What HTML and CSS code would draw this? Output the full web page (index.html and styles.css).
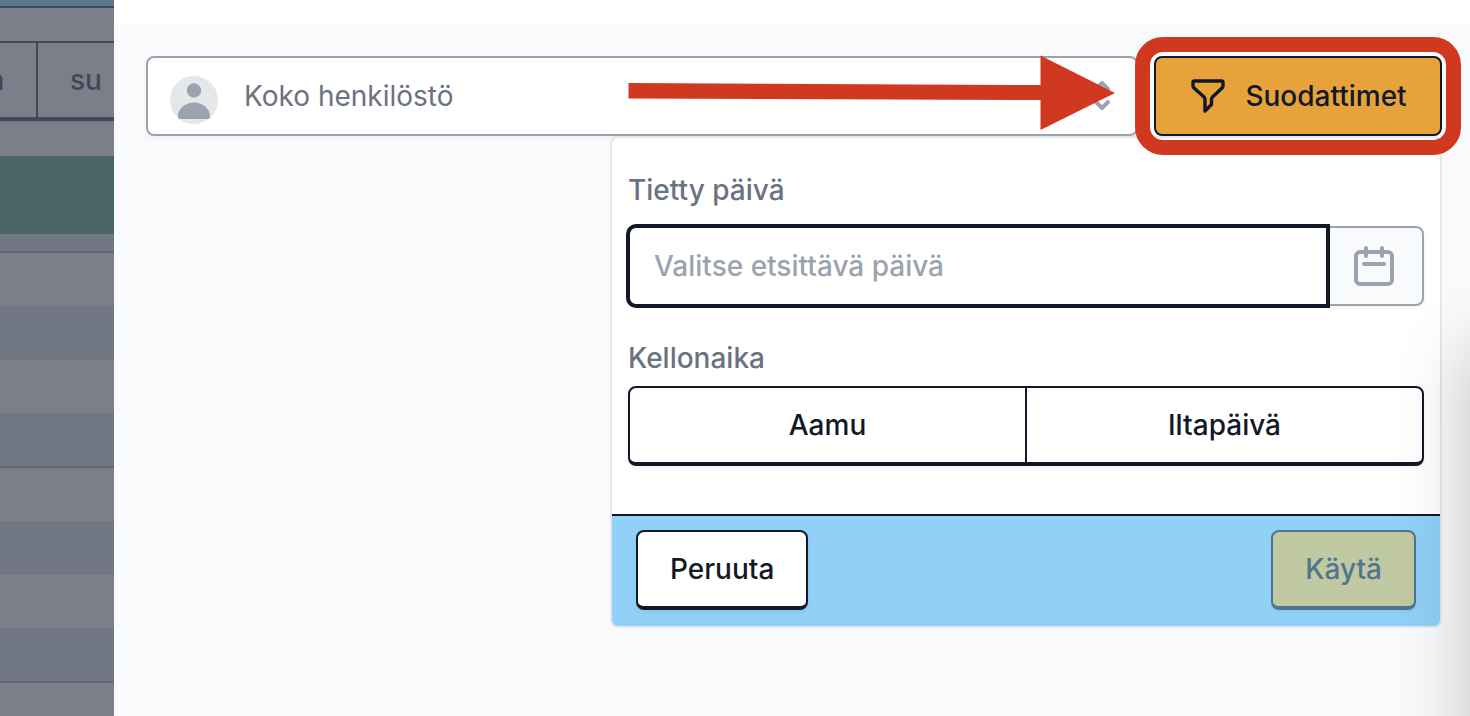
FILE: index.html
```html
<!DOCTYPE html>
<html lang="fi">
<head>
<meta charset="utf-8">
<title>Suodattimet</title>
<link rel="stylesheet" href="styles.css">
</head>
<body>
<div class="app">
  <aside class="calendar">
    <div class="cal-top"></div>
    <div class="cal-gap"></div>
    <div class="cal-days"><span class="cal-day">la</span><span class="cal-day">su</span></div>
    <div class="cal-space"></div>
    <div class="cal-event"></div>
    <div class="cal-rest"></div>
    <div class="cal-hour"></div>
    <div class="cal-hour"></div>
    <div class="cal-hour"></div>
  </aside>
  <main class="drawer">
    <div class="drawer-head"></div>
    <div class="drawer-body">
      <div class="toolbar">
        <div class="staff">
          <svg class="avatar" viewBox="0 0 48 48" aria-hidden="true"><circle cx="24" cy="24" r="24" fill="#e5e7eb"/><circle cx="24" cy="14.500" r="7.200" fill="#9ca3af"/><path d="M8 41C7.500 33 15 26.500 24 26.500S40.500 33 40 41Q40 43 38 43H10Q8 43 8 41Z" fill="#9ca3af"/></svg>
          <select class="staff-select" aria-label="Henkilöstö"><option>Koko henkilöstö</option></select>
          <svg class="chevrons" viewBox="0 0 20 32" aria-hidden="true"><path d="M4 9l6-6 6 6M4 22l6 6 6-6" fill="none" stroke="#9ca3af" stroke-width="4" stroke-linecap="round" stroke-linejoin="round"/></svg>
        </div>
        <div class="filter-wrap">
          <button class="filter-button" type="button">
            <svg class="funnel" viewBox="0 0 40 40" aria-hidden="true"><path d="M5.500 5H32.500Q34 5 34 6.500V10Q34 11 33 12L23.500 21Q22.500 22 22.500 23.500V28.500L16 35V23.500Q16 22 15 21L5 12Q4 11 4 10V6.500Q4 5 5.500 5Z" fill="none" stroke="#111827" stroke-width="3.400" stroke-linejoin="round"/></svg>
            <span>Suodattimet</span>
          </button>
          <div class="highlight"></div>
        </div>
        <form class="panel">
          <div class="fields">
            <label class="label" for="day">Tietty päivä</label>
            <div class="date">
              <input class="date-input" id="day" type="text" placeholder="Valitse etsittävä päivä">
              <button class="date-button" type="button" aria-label="Avaa kalenteri">
                <svg class="date-icon" viewBox="0 0 48 48" aria-hidden="true"><g fill="none" stroke="#9ca3af" stroke-width="4" stroke-linecap="round"><rect x="6" y="10" width="36" height="32" rx="4"/><path d="M16 6v8M32 6v8M14 22h20"/></g></svg>
              </button>
            </div>
            <span class="label label-time" id="time">Kellonaika</span>
            <div class="segments" role="group" aria-labelledby="time">
              <button class="segment" type="button">Aamu</button>
              <button class="segment" type="button">Iltapäivä</button>
            </div>
          </div>
          <div class="actions">
            <button class="action" type="button">Peruuta</button>
            <button class="action action-apply" type="submit" disabled>Käytä</button>
          </div>
        </form>
      </div>
    </div>
    <svg class="arrow" viewBox="0 0 488 76" aria-hidden="true"><path d="M.500 28L412.500 30V.500L487 38L412.500 75V45L.500 43.500Z" fill="#d13820"/></svg>
    <div class="edge-shadow"></div>
  </main>
</div>
</body>
</html>
```
FILE: styles.css
```css
* { box-sizing: border-box; }
body { margin: 0; color: #111827; font: 500 28px/40px Inter, sans-serif; }
button, input, select { margin: 0; font: inherit; color: inherit; }
.app { display: flex; min-height: 100vh; }

.calendar { flex: 0 0 114px; height: 100vh; overflow: hidden; background: #7c7f89; color: #424857; }
.cal-top { height: 8px; background: #5f778c; border-bottom: 2px solid #424857; }
.cal-gap { height: 33px; }
.cal-days { display: grid; grid-template-columns: 88px 98px; width: 186px; height: 80px; margin-left: -50px; border-top: 2px solid #424857; border-bottom: 4px solid #424857; box-shadow: 0 2px 4px rgba(66, 72, 87, .15); }
.cal-day { display: flex; align-items: center; justify-content: center; border-right: 2px solid #424857; }
.cal-space { height: 35px; }
.cal-event { height: 78px; background: #4c6666; }
.cal-rest { height: 17px; background: #727883; }
.cal-hour { height: 215px; border-top: 2px solid #646873; background: linear-gradient(#7c7f89 53px, #727883 53px 107px, #7c7f89 107px 160px, #727883 160px); }

.drawer { position: relative; flex: 1; display: flex; flex-direction: column; height: 100vh; overflow: hidden; background: #f9fafc; }
.drawer-head { height: 24px; background: #fff; }
.drawer-body { padding: 32px 28px 32px 32px; }
.toolbar { position: relative; display: flex; gap: 16px; }
.staff { position: relative; flex: 1; }
.staff-select { display: block; width: 100%; height: 80px; padding: 0 48px 0 96px; appearance: none; border: 2px solid #9ca3af; border-radius: 8px; background: #fff; color: #6b7280; font-weight: 400; box-shadow: 0 2px 4px rgba(0, 0, 0, .05); }
.avatar { position: absolute; left: 24px; top: 20px; width: 48px; height: 48px; }
.chevrons { position: absolute; right: 26px; top: 24px; width: 20px; height: 32px; }
.filter-wrap { position: relative; z-index: 2; }
.filter-button { display: flex; align-items: center; justify-content: center; gap: 16px; width: 288px; height: 80px; border: 2px solid #111827; border-radius: 8px; background: #e8a23b; }
.funnel { width: 40px; height: 40px; }
.highlight { position: absolute; inset: -19px; border: 15px solid #d13820; border-radius: 28px; pointer-events: none; }

.panel { position: absolute; z-index: 1; top: 80px; right: 0; width: 832px; border: 2px solid #e5e7eb; border-radius: 8px; overflow: hidden; background: #fff; }
.fields { display: flex; flex-direction: column; padding: 32px 16px 48px; }
.label { color: #6b7280; }
.date { display: flex; margin-top: 16px; }
.date-input { position: relative; z-index: 1; flex: 1; min-width: 0; height: 80px; padding: 0 24px; border: 2px solid #111827; border-radius: 8px 0 0 8px; outline: 0; box-shadow: 0 0 0 2px #111827; background: #fff; }
.date-input::placeholder { color: #9ca3af; opacity: 1; }
.date-button { display: flex; align-items: center; justify-content: center; width: 96px; padding: 0 2px 0 0; border: 2px solid #9ca3af; border-left: 0; border-radius: 0 8px 8px 0; background: #f9fafc; box-shadow: 0 2px 4px rgba(0, 0, 0, .05); }
.date-icon { width: 48px; height: 48px; }
.label-time { margin-top: 32px; }
.segments { display: flex; height: 80px; margin-top: 8px; border: 2px solid #111827; border-bottom-width: 4px; border-radius: 8px; box-shadow: 0 2px 4px rgba(0, 0, 0, .05); }
.segment { flex: 1; padding: 0; border: 0; background: transparent; }
.segment + .segment { border-left: 2px solid #111827; }
.actions { display: flex; justify-content: space-between; padding: 14px 24px 16px; border-top: 2px solid #111827; background: #91d0f7; }
.action { height: 80px; padding: 0 32px; border: 2px solid #111827; border-bottom-width: 4px; border-radius: 8px; background: #fff; box-shadow: 0 2px 4px rgba(0, 0, 0, .05); }
.action-apply { border-color: #51758f; background: #c0c9a1; color: #51758f; }

.arrow { position: absolute; z-index: 3; left: 514px; top: 55px; width: 488px; height: 76px; }
.edge-shadow { position: absolute; z-index: 4; left: 100%; top: 350px; bottom: -100px; width: 100px; box-shadow: 0 0 72px 2px rgba(0, 0, 0, .22); pointer-events: none; }
```
